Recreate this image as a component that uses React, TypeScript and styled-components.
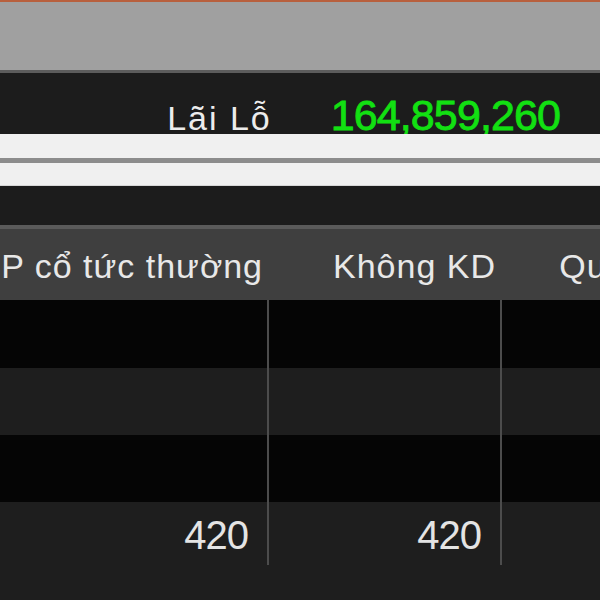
import React from 'react'
import styled, { createGlobalStyle } from 'styled-components'

const GlobalStyle = createGlobalStyle`
  html, body {
    margin: 0;
    padding: 0;
    background: #1e1e1e;
    overflow: hidden;
  }
  body {
    font-family: 'Liberation Sans', Arial, sans-serif;
  }
`

const Page = styled('div')`
  width: 600px;
  height: 600px;
  overflow: hidden;
  display: flex;
  flex-direction: column;
  background: #1e1e1e;
`

const AccentLine = styled('div')`
  height: 2px;
  background: #b8603e;
`

const Toolbar = styled('div')`
  height: 68px;
  background: #a0a0a0;
  border-bottom: 3px solid #5c5c5c;
`

const Summary = styled('div')`
  height: 61px;
  background: #1c1c1c;
  display: flex;
  justify-content: flex-end;
  align-items: baseline;
  gap: 61px;
  padding: 21px 40px 0 0;
  box-sizing: border-box;
  line-height: 1;
`

const Label = styled('span')`
  font-size: 34px;
  letter-spacing: 2px;
  margin-right: -2px;
  color: #ececec;
`

const Value = styled('span')`
  font-size: 43px;
  letter-spacing: -0.9px;
  -webkit-text-stroke: 0.8px #12e012;
  color: #12e012;
`

const ScrollStrip = styled('div')`
  display: flex;
  flex-direction: column;
  border-bottom: 1px solid #d6d6d6;
`

const Lane = styled('div')<{ h: number }>`
  height: ${props => props.h}px;
  background: #f0f0f0;
`

const LaneDivider = styled('div')`
  height: 5px;
  background: #8c8c8c;
`

const Gap = styled('div')`
  height: 39px;
  background: #1c1c1c;
`

const Table = styled('div')`
  border-top: 4px solid #5a5a5a;
  display: flex;
  flex-direction: column;
`

const Row = styled('div')<{ h: number; tone: 'head' | 'dark' | 'light' }>`
  display: flex;
  height: ${props => props.h}px;
  background: ${props =>
    props.tone === 'head' ? '#3f3f3f' : props.tone === 'dark' ? '#050505' : '#1e1e1e'};
`

const Cell = styled('div')<{ w: number; divider?: boolean; last?: boolean }>`
  flex: 0 0 ${props => props.w}px;
  box-sizing: border-box;
  display: flex;
  justify-content: flex-end;
  align-items: center;
  overflow: hidden;
  white-space: nowrap;
  position: relative;
  &::after {
    content: '';
    display: ${props => (props.divider ? 'block' : 'none')};
    position: absolute;
    right: 0;
    top: 0;
    bottom: ${props => (props.last ? '2px' : '0')};
    width: 2px;
    background: #4c4c4c;
  }
`

const HeadText = styled('span')`
  font-size: 34px;
  letter-spacing: 1px;
  color: #e8e8e8;
  padding-right: 6px;
  padding-top: 4px;
`

const NumText = styled('span')`
  font-size: 40px;
  letter-spacing: -1px;
  color: #e4e4e4;
  padding-right: 21px;
  padding-top: 2px;
`

const widths = [269, 233, 248]
const headers = ['CP cổ tức thường', 'Không KD', 'Quyền mua']
const rows: { h: number; tone: 'dark' | 'light'; values: string[] }[] = [
  { h: 68, tone: 'dark', values: ['', '', ''] },
  { h: 67, tone: 'light', values: ['', '', ''] },
  { h: 67, tone: 'dark', values: ['', '', ''] },
  { h: 65, tone: 'light', values: ['420', '420', ''] },
]

export default function App() {
  return (
    <Page>
      <GlobalStyle />
      <AccentLine />
      <Toolbar />
      <Summary>
        <Label>Lãi Lỗ</Label>
        <Value>164,859,260</Value>
      </Summary>
      <ScrollStrip>
        <Lane h={24} />
        <LaneDivider />
        <Lane h={22} />
      </ScrollStrip>
      <Gap />
      <Table>
        <Row h={71} tone="head">
          {headers.map((t, i) => (
            <Cell key={t} w={widths[i]}>
              <HeadText>{t}</HeadText>
            </Cell>
          ))}
        </Row>
        {rows.map((r, ri) => (
          <Row key={ri} h={r.h} tone={r.tone}>
            {r.values.map((v, i) => (
              <Cell key={i} w={widths[i]} divider={i < 2} last={ri === rows.length - 1}>
                {v && <NumText>{v}</NumText>}
              </Cell>
            ))}
          </Row>
        ))}
      </Table>
    </Page>
  )
}
